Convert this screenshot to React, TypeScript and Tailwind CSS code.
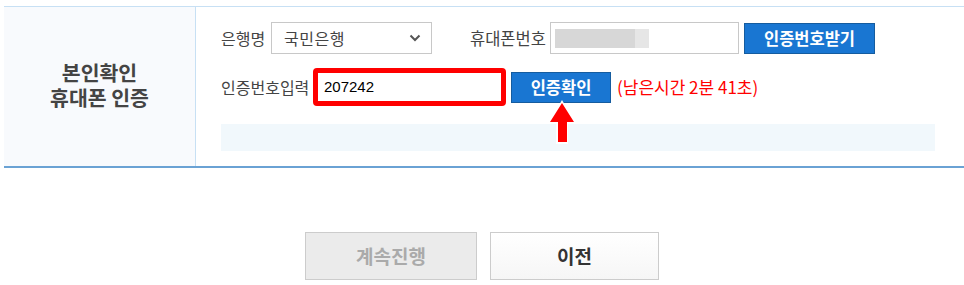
import React from "react";

const font = { fontFamily: '"Noto Sans CJK KR", "Liberation Sans", sans-serif' };

export default function App() {
  return (
    <div className="relative w-[964px] h-[285px] bg-white pt-[6px] pl-[4px] overflow-hidden" style={font}>
      <div className="flex h-[162px] border-t border-[#c7e0f4] border-b-2 border-b-[#6aa2d4]">
        <div className="w-[192px] shrink-0 bg-[#f8fafd] border-r border-[#c7e0f4] flex items-center justify-center text-[20.5px] font-bold text-[#444] pb-[4px]">
          <p className="text-center leading-[25px]">
            본인확인
            <br />
            휴대폰 인증
          </p>
        </div>
        <div className="flex-1 pl-[25px] pt-[15px] flex flex-col">
          <div className="flex items-center h-[32px] text-[16px] text-[#444]">
            <div className="w-[50px]">은행명</div>
            <div className="w-[161px] h-[32px] border border-[#c8c8c8] flex items-center pl-[12px] pr-[10px] justify-between text-[16px] text-[#444]">
              <span className="tracking-[0.5px]">국민은행</span>
              <svg width="12" height="8" viewBox="0 0 12 8">
                <path d="M1.5 1.5 L6 6 L10.5 1.5" fill="none" stroke="#555" strokeWidth="2" />
              </svg>
            </div>
            <div className="ml-[38px] w-[80px] text-[16.5px]">휴대폰번호</div>
            <div className="w-[189px] h-[32px] border border-[#c8c8c8] flex items-center pl-[4px]">
              <div className="w-[80px] h-[19px] bg-[#d7d7d7]" />
              <div className="w-[14px] h-[19px] bg-[#e6e6e6]" />
            </div>
            <div className="ml-[5px] w-[131px] h-[31px] bg-[#1976d2] border border-[#155c9f] text-white font-bold text-[16.5px] flex items-center justify-center">
              인증번호받기
            </div>
          </div>
          <div className="flex items-center mt-[14px] h-[38px] text-[16px] text-[#444]">
            <div className="w-[92px]">인증번호입력</div>
            <div className="w-[193px] h-[38px] border-[5px] border-[#ff0000] rounded-[4px] flex items-center pl-[6px] text-[15px] text-black" style={{ fontFamily: '"Liberation Sans", sans-serif' }}>
              207242
            </div>
            <div className="ml-[5px] w-[100px] h-[31px] bg-[#1976d2] border border-[#155c9f] text-white font-bold text-[16.5px] flex items-center justify-center">
              인증확인
            </div>
            <div className="ml-[6px] text-[#ff0000] text-[17px]">(남은시간 2분 41초)</div>
          </div>
          <div className="mt-[18px] w-[714px] h-[27px] bg-[#f1f8fc]" />
        </div>
      </div>
      <div className="flex justify-center gap-[13px] mt-[64px] pr-[4px]">
        <div className="w-[172px] h-[48px] bg-[#ebebeb] border border-[#cccccc] flex items-center justify-center text-[19px] font-bold text-[#aaaaaa]">
          계속진행
        </div>
        <div className="w-[169px] h-[48px] bg-gradient-to-b from-white to-[#f6f6f6] border border-[#cccccc] flex items-center justify-center text-[19px] font-bold text-[#333]">
          이전
        </div>
      </div>
      <svg className="absolute left-[545px] top-[98px]" width="34" height="48" viewBox="0 0 34 48">
        <path d="M17 2 L31 26 L23 26 L23 46 L11 46 L11 26 L3 26 Z" fill="white" />
        <path d="M17 5 L29 24 L22 24 L22 44 L13 44 L13 24 L5 24 Z" fill="#ff0000" />
      </svg>
    </div>
  );
}
